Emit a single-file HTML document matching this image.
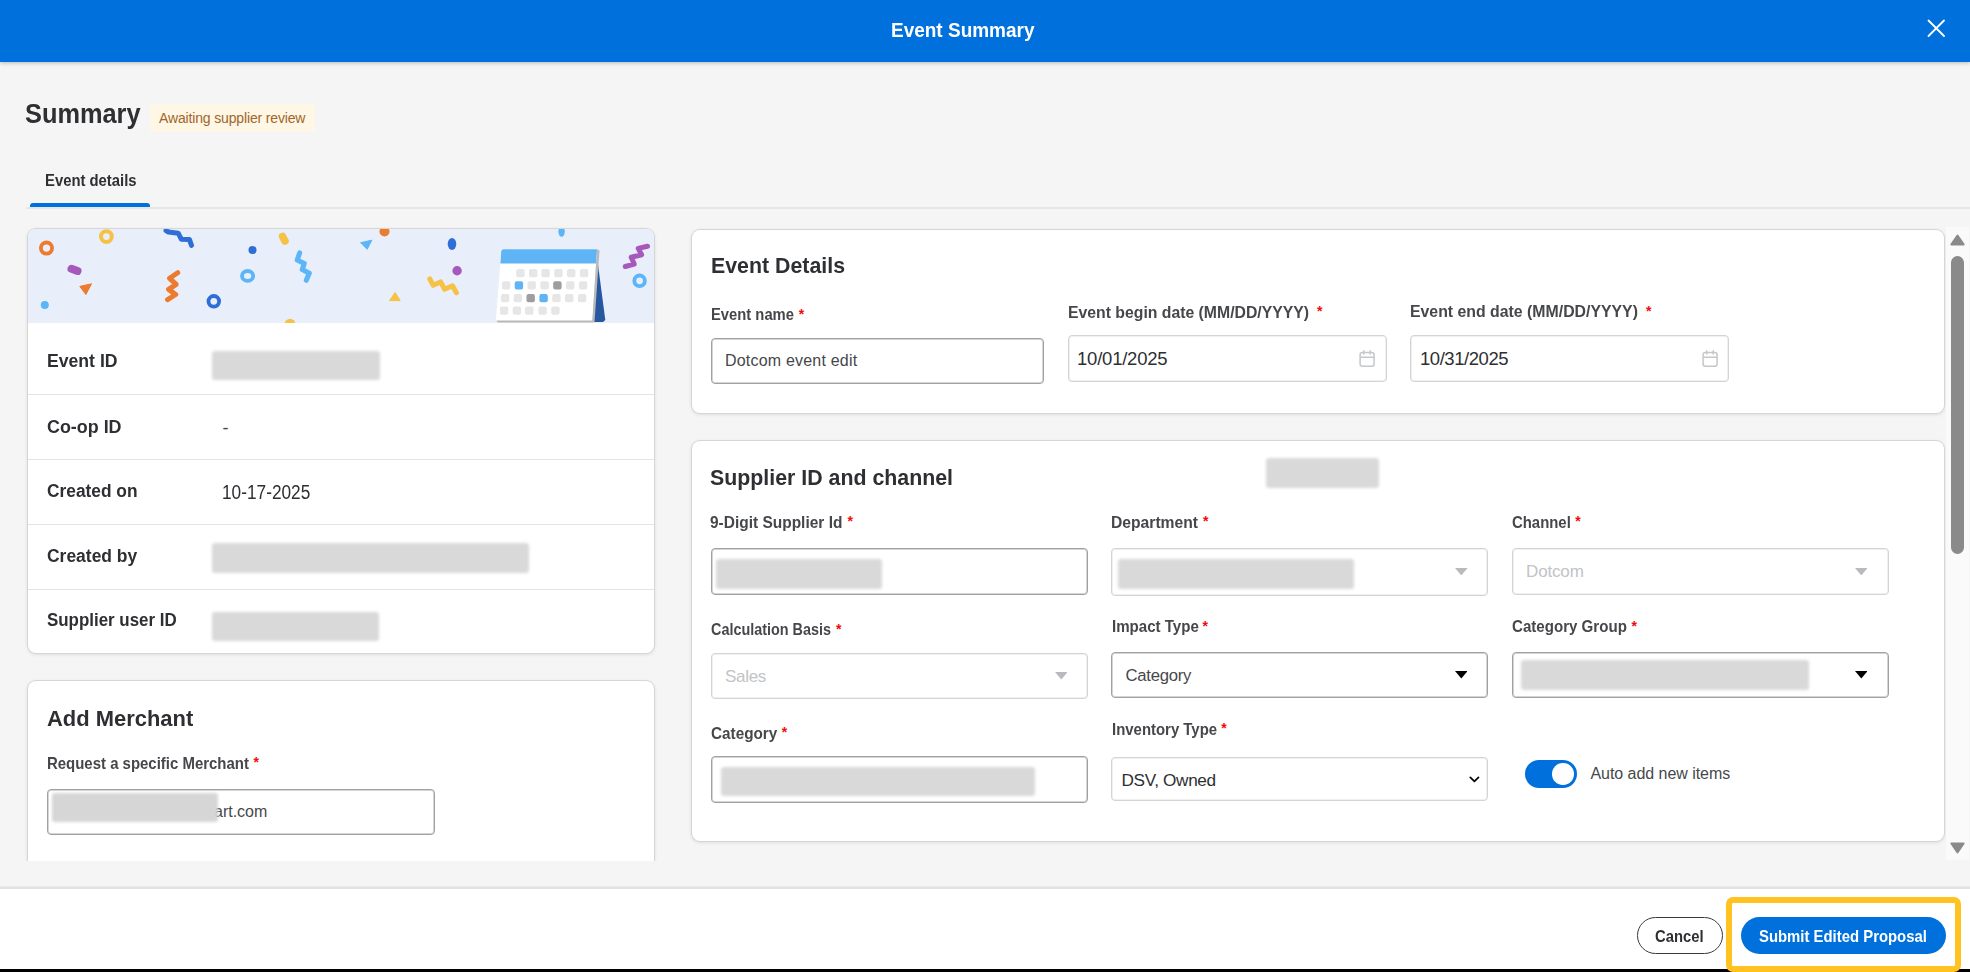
<!DOCTYPE html><html><head><meta charset="utf-8"><title>Event Summary</title><style>
*{box-sizing:border-box;margin:0;padding:0}
html,body{width:1970px;height:972px;overflow:hidden}
body{position:relative;background:#f5f5f5;font-family:"Liberation Sans",sans-serif;}
.t{position:absolute;line-height:1;white-space:nowrap}
.a{position:absolute}
.blur{position:absolute;background:#d9d9d9;border-radius:3px;filter:blur(1.6px)}
.inp{position:absolute;background:#fff;border:1px solid #a0a1a5;border-radius:4px;box-shadow:inset 0 0 0 1px rgba(160,161,165,.45)}
.inpl{position:absolute;background:#fff;border:1px solid #d4d4d4;border-radius:4px;box-shadow:inset 0 0 0 1px rgba(212,212,212,.35)}
.req{color:#f20a0a}
</style></head><body>
<div class="a" style="left:0;top:0;width:1970px;height:62px;background:#0071dc;box-shadow:0 1px 4px rgba(0,0,0,.25)"></div>
<div class="t" style="left:891.0px;top:19px;font-size:21.0px;font-weight:700;color:#fff;transform:scaleX(0.904);transform-origin:0 0;">Event Summary</div>
<svg class="a" style="left:1920px;top:12px" width="32" height="32" viewBox="1920 12 32 32"><path d="M1928.5 20.5L1944 36M1944 20.5L1928.5 36" stroke="#fff" stroke-width="1.8" stroke-linecap="round"/></svg>
<div class="t" style="left:25.0px;top:101px;font-size:27.0px;font-weight:700;color:#2e2f32;transform:scaleX(0.939);transform-origin:0 0;">Summary</div>
<div class="a" style="left:150px;top:104px;width:165px;height:28px;background:#fff7e5;border-radius:3px"></div>
<div class="t" style="left:159.0px;top:111px;font-size:14.0px;font-weight:400;color:#a0652c;letter-spacing:-0.15px;">Awaiting supplier review</div>
<div class="t" style="left:44.5px;top:172px;font-size:16.5px;font-weight:700;color:#2e2f32;transform:scaleX(0.899);transform-origin:0 0;">Event details</div>
<div class="a" style="left:26px;top:207px;width:1944px;height:2px;background:#e6e6e6"></div>
<div class="a" style="left:30px;top:203px;width:120px;height:4px;background:#0071dc;border-radius:3px 3px 0 0"></div>
<div class="a" style="left:28px;top:229px;width:626px;height:424px;background:#fff;border-radius:8px;box-shadow:0 0 0 1px #d6d6d6,0 1px 4px rgba(0,0,0,.14);overflow:hidden"><svg class="a" style="left:0;top:0" width="626" height="94" viewBox="28 229 626 94"><rect x="28" y="229" width="626" height="94" fill="#e8eefa"/><circle cx="46.5" cy="248.1" r="5.6" fill="none" stroke="#ec7b2d" stroke-width="3.8"/><circle cx="106.4" cy="236.6" r="5.4" fill="none" stroke="#f6c245" stroke-width="4"/><polyline points="166,230.5 168.5,232 178.2,233.2 181.3,239.2 189.4,239.4 191.5,245.3" fill="none" stroke="#2e6ed6" stroke-width="5" stroke-linecap="round" stroke-linejoin="round"/><line x1="71.5" y1="268.8" x2="77.5" y2="271" stroke="#a659ba" stroke-width="8" stroke-linecap="round"/><polygon points="79.8,286.4 91.5,283.8 85.9,294.5" fill="#ec7b2d" stroke="#ec7b2d" stroke-width="1" stroke-linejoin="round"/><circle cx="44.8" cy="304.9" r="4" fill="#5bb5f7"/><polyline points="177.7,272.7 169.6,278.3 176.2,284.3 168.6,289.4 175.7,294.5 167.6,299.6" fill="none" stroke="#ec7b2d" stroke-width="5" stroke-linecap="round" stroke-linejoin="round"/><circle cx="213.8" cy="301.3" r="5.3" fill="none" stroke="#2e6ed6" stroke-width="3.8"/><line x1="282.6" y1="236.4" x2="285" y2="241" stroke="#f6c245" stroke-width="7.6" stroke-linecap="round"/><circle cx="252.5" cy="250.1" r="4" fill="#2e6ed6"/><ellipse cx="247.6" cy="275.9" rx="5.6" ry="4.9" fill="none" stroke="#5bb5f7" stroke-width="3.8"/><polyline points="299.7,252.9 297.2,260 304.3,263.5 302.2,269.6 309.3,273.2 306.3,280.3" fill="none" stroke="#5bb5f7" stroke-width="5" stroke-linecap="round" stroke-linejoin="round"/><polygon points="360.6,242.7 371.8,240.2 367.2,249.3" fill="#5bb5f7" stroke="#5bb5f7" stroke-width="1" stroke-linejoin="round"/><circle cx="384.5" cy="231.5" r="5" fill="#ec7b2d"/><polygon points="389.5,300.6 395.1,292.5 400.2,300.6" fill="#f6c245" stroke="#f6c245" stroke-width="1" stroke-linejoin="round"/><circle cx="290" cy="324" r="5.2" fill="#f6c245"/><ellipse cx="452" cy="244" rx="4.3" ry="6" fill="#2e6ed6"/><circle cx="457.1" cy="270.7" r="4.7" fill="#a659ba"/><polyline points="429.8,278.9 433.2,285.3 440.6,281.9 444.6,289.3 452.5,285.8 456.4,292.7" fill="none" stroke="#f6c245" stroke-width="5" stroke-linecap="round" stroke-linejoin="round"/><ellipse cx="561.6" cy="231.5" rx="3.2" ry="5.2" fill="#5bb5f7"/><polyline points="647.5,246.3 638.2,248.4 641.6,254.7 631.2,257.3 634.2,264.1 625.3,266.5" fill="none" stroke="#a659ba" stroke-width="5" stroke-linecap="round" stroke-linejoin="round"/><circle cx="639.6" cy="280.8" r="5.3" fill="none" stroke="#5bb5f7" stroke-width="3.8"/><polygon points="596.2,251 605.3,320 603,322 592.5,322" fill="#27579e"/><polygon points="496.5,320 592,320 596.5,249 599.5,250.5 594.5,322.5 497.5,322.5" fill="#b9b9b9"/><polygon points="501.4,249.2 597,249.2 592.2,320.6 495.9,320.6" fill="#fff"/><path d="M503.4,249.2 L597,249.2 L596,263.6 L500.4,263.6 L501.3,251.2 Q501.5,249.2 503.4,249.2Z" fill="#5fb4f6"/><rect x="516.2" y="269" width="8.4" height="8.2" rx="2" fill="#e6e6e6"/><rect x="529" y="269" width="8.4" height="8.2" rx="2" fill="#e6e6e6"/><rect x="541.4" y="269" width="8.4" height="8.2" rx="2" fill="#e6e6e6"/><rect x="554.2" y="269" width="8.4" height="8.2" rx="2" fill="#e6e6e6"/><rect x="567" y="269" width="8.4" height="8.2" rx="2" fill="#e6e6e6"/><rect x="579.9" y="269" width="8.4" height="8.2" rx="2" fill="#e6e6e6"/><rect x="501.9" y="281.3" width="8.4" height="8.2" rx="2" fill="#e6e6e6"/><rect x="514.7" y="281.3" width="8.4" height="8.2" rx="2" fill="#5fb4f6"/><rect x="527.5" y="281.3" width="8.4" height="8.2" rx="2" fill="#e6e6e6"/><rect x="540.4" y="281.3" width="8.4" height="8.2" rx="2" fill="#e6e6e6"/><rect x="553.2" y="281.3" width="8.4" height="8.2" rx="2" fill="#9e9e9e"/><rect x="566" y="281.3" width="8.4" height="8.2" rx="2" fill="#e6e6e6"/><rect x="578.9" y="281.3" width="8.4" height="8.2" rx="2" fill="#e6e6e6"/><rect x="500.9" y="294" width="8.4" height="8.2" rx="2" fill="#e6e6e6"/><rect x="513.7" y="294" width="8.4" height="8.2" rx="2" fill="#e6e6e6"/><rect x="526.5" y="294" width="8.4" height="8.2" rx="2" fill="#9e9e9e"/><rect x="539.4" y="294" width="8.4" height="8.2" rx="2" fill="#5fb4f6"/><rect x="552.2" y="294" width="8.4" height="8.2" rx="2" fill="#e6e6e6"/><rect x="565" y="294" width="8.4" height="8.2" rx="2" fill="#e6e6e6"/><rect x="577.9" y="294" width="8.4" height="8.2" rx="2" fill="#e6e6e6"/><rect x="499.9" y="306.5" width="8.4" height="8.2" rx="2" fill="#e6e6e6"/><rect x="512.7" y="306.5" width="8.4" height="8.2" rx="2" fill="#e6e6e6"/><rect x="525" y="306.5" width="8.4" height="8.2" rx="2" fill="#e6e6e6"/><rect x="538.4" y="306.5" width="8.4" height="8.2" rx="2" fill="#e6e6e6"/><rect x="551.2" y="306.5" width="8.4" height="8.2" rx="2" fill="#e6e6e6"/></svg></div>
<div class="a" style="left:28px;top:394px;width:626px;height:1px;background:#e3e4e5"></div>
<div class="a" style="left:28px;top:459px;width:626px;height:1px;background:#e3e4e5"></div>
<div class="a" style="left:28px;top:524px;width:626px;height:1px;background:#e3e4e5"></div>
<div class="a" style="left:28px;top:589px;width:626px;height:1px;background:#e3e4e5"></div>
<div class="t" style="left:46.5px;top:352px;font-size:18.0px;font-weight:700;color:#2e2f32;transform:scaleX(0.979);transform-origin:0 0;">Event ID</div>
<div class="t" style="left:46.5px;top:418px;font-size:18.0px;font-weight:700;color:#2e2f32;transform:scaleX(0.994);transform-origin:0 0;">Co-op ID</div>
<div class="t" style="left:46.5px;top:482px;font-size:18.0px;font-weight:700;color:#2e2f32;transform:scaleX(0.963);transform-origin:0 0;">Created on</div>
<div class="t" style="left:46.5px;top:547px;font-size:18.0px;font-weight:700;color:#2e2f32;transform:scaleX(0.970);transform-origin:0 0;">Created by</div>
<div class="t" style="left:46.5px;top:611px;font-size:18.0px;font-weight:700;color:#2e2f32;transform:scaleX(0.939);transform-origin:0 0;">Supplier user ID</div>
<div class="t" style="left:222.5px;top:419px;font-size:18.0px;font-weight:400;color:#46474a;letter-spacing:0.00px;">-</div>
<div class="t" style="left:221.5px;top:483px;font-size:19.5px;font-weight:400;color:#2e2f32;transform:scaleX(0.885);transform-origin:0 0;">10-17-2025</div>
<div class="blur" style="left:212px;top:351px;width:168px;height:29px"></div>
<div class="blur" style="left:212px;top:543px;width:317px;height:30px"></div>
<div class="blur" style="left:212px;top:612px;width:167px;height:29px"></div>
<div class="a" style="left:0;top:660px;width:680px;height:201px;overflow:hidden"><div class="a" style="left:28px;top:21px;width:626px;height:300px;background:#fff;border-radius:8px;box-shadow:0 0 0 1px #d6d6d6,0 1px 4px rgba(0,0,0,.14)"></div></div>
<div class="t" style="left:46.5px;top:708px;font-size:22.5px;font-weight:700;color:#2e2f32;transform:scaleX(0.975);transform-origin:0 0;">Add Merchant</div>
<div class="t" style="left:47.0px;top:755px;font-size:16.5px;font-weight:700;color:#46474a;transform:scaleX(0.906);transform-origin:0 0;">Request a specific Merchant</div>
<div class="t req" style="left:253.4px;top:755px;font-size:14px;font-weight:700">*</div>
<div class="inp" style="left:47px;top:789px;width:388px;height:46px"></div>
<div class="t" style="left:214.0px;top:804px;font-size:16.0px;font-weight:400;color:#46474a;letter-spacing:0.00px;">art.com</div>
<div class="blur" style="left:52px;top:793px;width:166px;height:29px;background:#d6d6d6"></div>
<div class="a" style="left:692px;top:230px;width:1252px;height:183px;background:#fff;border-radius:8px;box-shadow:0 0 0 1px #d6d6d6,0 1px 4px rgba(0,0,0,.14)"></div>
<div class="a" style="left:692px;top:441px;width:1252px;height:400px;background:#fff;border-radius:8px;box-shadow:0 0 0 1px #d6d6d6,0 1px 4px rgba(0,0,0,.14)"></div>
<div class="t" style="left:710.8px;top:254px;font-size:22.8px;font-weight:700;color:#2e2f32;transform:scaleX(0.936);transform-origin:0 0;">Event Details</div>
<div class="t" style="left:711.0px;top:307px;font-size:16.0px;font-weight:700;color:#46474a;transform:scaleX(0.924);transform-origin:0 0;">Event name</div>
<div class="t req" style="left:798.7px;top:307px;font-size:14px;font-weight:700">*</div>
<div class="inp" style="left:711px;top:338px;width:333px;height:46px"></div>
<div class="t" style="left:725.0px;top:353px;font-size:16.0px;font-weight:400;color:#46474a;letter-spacing:0.20px;">Dotcom event edit</div>
<div class="t" style="left:1067.5px;top:304px;font-size:16.5px;font-weight:700;color:#46474a;transform:scaleX(0.956);transform-origin:0 0;">Event begin date (MM/DD/YYYY)</div>
<div class="t req" style="left:1317.0px;top:304px;font-size:14px;font-weight:700">*</div>
<div class="inpl" style="left:1068px;top:335px;width:319px;height:47px"></div>
<div class="t" style="left:1077.0px;top:350px;font-size:18.5px;font-weight:400;color:#2e2f32;letter-spacing:-0.22px;">10/01/2025</div>
<div class="t" style="left:1410.2px;top:303px;font-size:16.5px;font-weight:700;color:#46474a;transform:scaleX(0.960);transform-origin:0 0;">Event end date (MM/DD/YYYY)</div>
<div class="t req" style="left:1646.0px;top:304px;font-size:14px;font-weight:700">*</div>
<div class="inpl" style="left:1410px;top:335px;width:319px;height:47px"></div>
<div class="t" style="left:1420.0px;top:350px;font-size:18.5px;font-weight:400;color:#2e2f32;letter-spacing:-0.45px;">10/31/2025</div>
<svg class="a" style="left:1357px;top:348px" width="20" height="22" viewBox="1357 348 20 22"><rect x="1360.1" y="352.6" width="14" height="13.6" rx="2.2" fill="none" stroke="#c6c7c9" stroke-width="1.5"/><path d="M1360.1 357.2H1374.1M1363.7 350.3V354.6M1370.2 350.3V354.6" stroke="#c6c7c9" stroke-width="1.5" fill="none"/></svg>
<svg class="a" style="left:1700px;top:348px" width="20" height="22" viewBox="1357 348 20 22"><rect x="1360.1" y="352.6" width="14" height="13.6" rx="2.2" fill="none" stroke="#c6c7c9" stroke-width="1.5"/><path d="M1360.1 357.2H1374.1M1363.7 350.3V354.6M1370.2 350.3V354.6" stroke="#c6c7c9" stroke-width="1.5" fill="none"/></svg>
<div class="t" style="left:710.0px;top:466px;font-size:22.8px;font-weight:700;color:#2e2f32;transform:scaleX(0.936);transform-origin:0 0;">Supplier ID and channel</div>
<div class="blur" style="left:1266px;top:458px;width:113px;height:30px"></div>
<div class="t" style="left:710.3px;top:514px;font-size:16.4px;font-weight:700;color:#46474a;transform:scaleX(0.944);transform-origin:0 0;">9-Digit Supplier Id</div>
<div class="t req" style="left:847.5px;top:514px;font-size:14px;font-weight:700">*</div>
<div class="inp" style="left:711px;top:548px;width:377px;height:47px"></div>
<div class="blur" style="left:716px;top:559px;width:166px;height:30px"></div>
<div class="t" style="left:1111.0px;top:515px;font-size:16.0px;font-weight:700;color:#46474a;transform:scaleX(0.979);transform-origin:0 0;">Department</div>
<div class="t req" style="left:1203.0px;top:514px;font-size:14px;font-weight:700">*</div>
<div class="inpl" style="left:1111px;top:548px;width:377px;height:48px"></div>
<div class="blur" style="left:1118px;top:559px;width:236px;height:30px"></div>
<div class="t" style="left:1511.5px;top:514px;font-size:16.1px;font-weight:700;color:#46474a;transform:scaleX(0.926);transform-origin:0 0;">Channel</div>
<div class="t req" style="left:1575.2px;top:514px;font-size:14px;font-weight:700">*</div>
<div class="inpl" style="left:1512px;top:548px;width:377px;height:47px"></div>
<div class="t" style="left:1526.0px;top:563px;font-size:17.0px;font-weight:400;color:#c2c3c6;letter-spacing:-0.15px;">Dotcom</div>
<svg class="a" style="left:1455.1px;top:567.8px" width="12.6" height="7.4" viewBox="0 0 12 7" preserveAspectRatio="none"><polygon points="0,0 12,0 6,7" fill="#b9babe"/></svg>
<svg class="a" style="left:1854.6px;top:567.7px" width="12.6" height="7.4" viewBox="0 0 12 7" preserveAspectRatio="none"><polygon points="0,0 12,0 6,7" fill="#b9babe"/></svg>
<div class="t" style="left:711.0px;top:622px;font-size:15.8px;font-weight:700;color:#46474a;transform:scaleX(0.911);transform-origin:0 0;">Calculation Basis</div>
<div class="t req" style="left:836.0px;top:622px;font-size:14px;font-weight:700">*</div>
<div class="inpl" style="left:711px;top:653px;width:377px;height:46px"></div>
<div class="t" style="left:725.0px;top:668px;font-size:17.0px;font-weight:400;color:#c2c3c6;letter-spacing:-0.30px;">Sales</div>
<svg class="a" style="left:1054.6px;top:672.3px" width="12.6" height="7.4" viewBox="0 0 12 7" preserveAspectRatio="none"><polygon points="0,0 12,0 6,7" fill="#b9babe"/></svg>
<div class="t" style="left:1111.5px;top:618px;font-size:16.3px;font-weight:700;color:#46474a;transform:scaleX(0.926);transform-origin:0 0;">Impact Type</div>
<div class="t req" style="left:1202.5px;top:619px;font-size:14px;font-weight:700">*</div>
<div class="inp" style="left:1111px;top:652px;width:377px;height:46px"></div>
<div class="t" style="left:1125.5px;top:668px;font-size:16.7px;font-weight:400;color:#46474a;letter-spacing:-0.25px;">Category</div>
<svg class="a" style="left:1454.6px;top:671.3px" width="12.6" height="7.4" viewBox="0 0 12 7" preserveAspectRatio="none"><polygon points="0,0 12,0 6,7" fill="#000"/></svg>
<div class="t" style="left:1511.5px;top:618px;font-size:16.3px;font-weight:700;color:#46474a;transform:scaleX(0.927);transform-origin:0 0;">Category Group</div>
<div class="t req" style="left:1631.6px;top:619px;font-size:14px;font-weight:700">*</div>
<div class="inp" style="left:1512px;top:652px;width:377px;height:46px"></div>
<div class="blur" style="left:1521px;top:660px;width:288px;height:30px"></div>
<svg class="a" style="left:1854.6px;top:671.3px" width="12.6" height="7.4" viewBox="0 0 12 7" preserveAspectRatio="none"><polygon points="0,0 12,0 6,7" fill="#000"/></svg>
<div class="t" style="left:711.0px;top:726px;font-size:16.9px;font-weight:700;color:#46474a;transform:scaleX(0.905);transform-origin:0 0;">Category</div>
<div class="t req" style="left:781.7px;top:725px;font-size:14px;font-weight:700">*</div>
<div class="inp" style="left:711px;top:756px;width:377px;height:47px"></div>
<div class="blur" style="left:721px;top:767px;width:314px;height:29px"></div>
<div class="t" style="left:1112.0px;top:722px;font-size:16.9px;font-weight:700;color:#46474a;transform:scaleX(0.884);transform-origin:0 0;">Inventory Type</div>
<div class="t req" style="left:1221.2px;top:721px;font-size:14px;font-weight:700">*</div>
<div class="inpl" style="left:1111px;top:757px;width:377px;height:44px"></div>
<div class="t" style="left:1121.5px;top:772px;font-size:17.2px;font-weight:400;color:#2e2f32;letter-spacing:-0.35px;">DSV, Owned</div>
<svg class="a" style="left:1466px;top:773px" width="17" height="13" viewBox="1466 773 17 13"><path d="M1470.3 777.3L1474.4 781.4L1478.5 777.3" fill="none" stroke="#000" stroke-width="1.7" stroke-linecap="round" stroke-linejoin="round"/></svg>
<div class="a" style="left:1525px;top:759.5px;width:51.5px;height:28px;border-radius:14px;background:#0071dc"></div>
<div class="a" style="left:1552px;top:763px;width:21.5px;height:21.5px;border-radius:50%;background:#fff"></div>
<div class="t" style="left:1590.5px;top:766px;font-size:16.0px;font-weight:400;color:#46474a;letter-spacing:-0.05px;">Auto add new items</div>
<div class="a" style="left:1946px;top:227px;width:23px;height:633px;background:#fafafa"></div>
<svg class="a" style="left:1949px;top:232px" width="17" height="15" viewBox="0 0 17 15"><polygon points="8.5,3.6 14.6,12.4 2.4,12.4" fill="#8a8a8a" stroke="#8a8a8a" stroke-width="2" stroke-linejoin="round"/></svg>
<div class="a" style="left:1951px;top:255.5px;width:13.3px;height:298.5px;border-radius:7px;background:#8a8a8a"></div>
<svg class="a" style="left:1949px;top:840px" width="17" height="15" viewBox="0 0 17 15"><polygon points="2.4,3.4 14.6,3.4 8.5,12.4" fill="#8a8a8a" stroke="#8a8a8a" stroke-width="2" stroke-linejoin="round"/></svg>
<div class="a" style="left:0;top:886.5px;width:1970px;height:85.5px;background:#fff;border-top:2px solid #e2e2e2;box-shadow:0 -1px 1px rgba(0,0,0,.04)"></div>
<div class="a" style="left:0;top:969px;width:1970px;height:3px;background:#000"></div>
<div class="a" style="left:1636.5px;top:916.5px;width:86px;height:37.5px;border-radius:19px;border:1.3px solid #3a3b3e;background:#fff"></div>
<div class="t" style="left:1655.0px;top:928px;font-size:16.4px;font-weight:700;color:#2e2f32;transform:scaleX(0.904);transform-origin:0 0;">Cancel</div>
<div class="a" style="left:1741px;top:916.5px;width:205px;height:37.5px;border-radius:19px;background:#0071dc"></div>
<div class="t" style="left:1759.3px;top:929px;font-size:16.7px;font-weight:700;color:#fff;transform:scaleX(0.892);transform-origin:0 0;">Submit Edited Proposal</div>
<div class="a" style="left:1726px;top:897px;width:235px;height:75px;border:6px solid #ffc220;border-radius:7px"></div>
</body></html>
